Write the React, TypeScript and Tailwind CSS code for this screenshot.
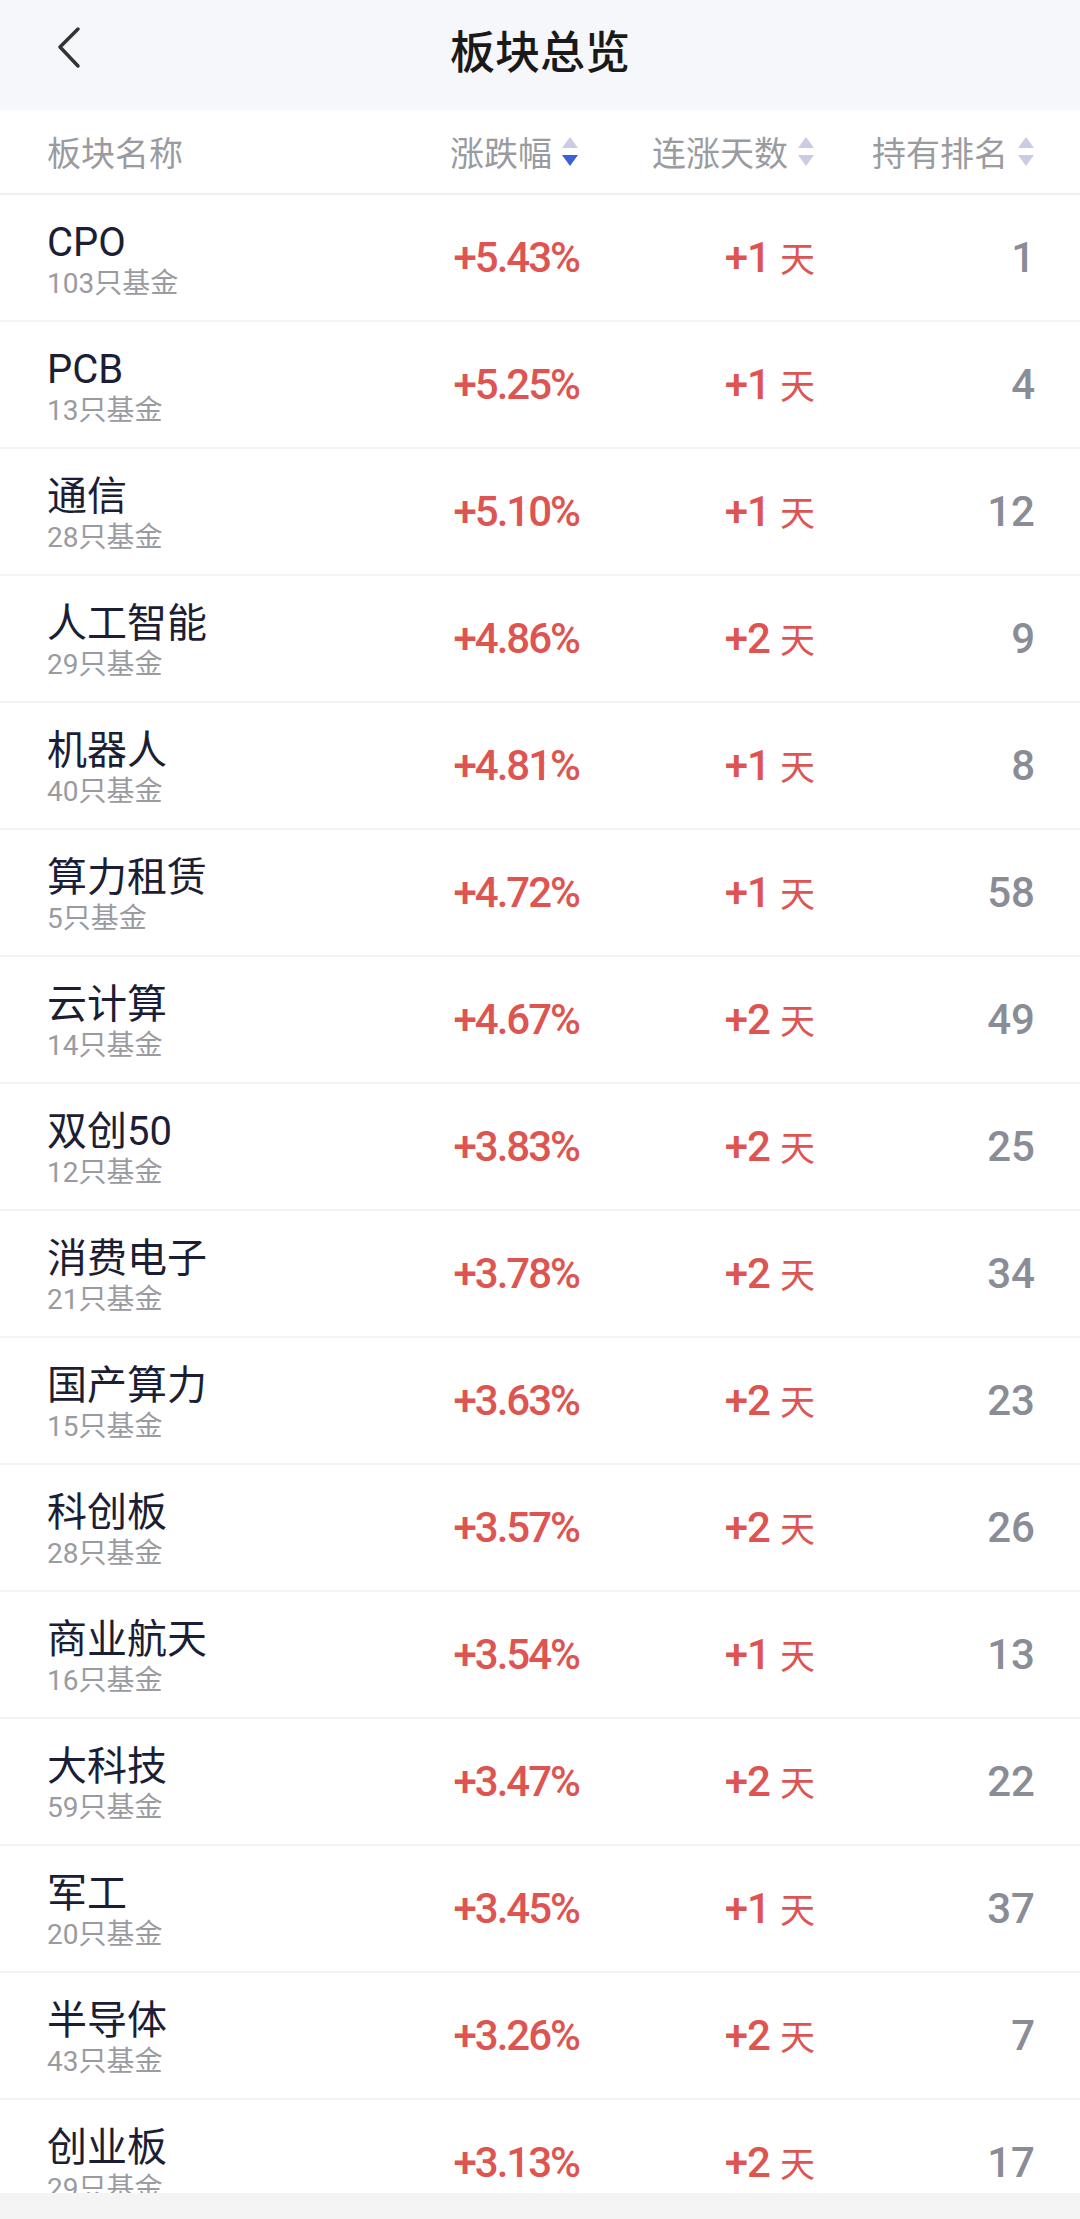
import React from 'react';

type Sector = {
    name: string;
    funds: number;
    change: string;
    days: number;
    rank: number;
};

const sectors: Sector[] = [
    { name: 'CPO', funds: 103, change: '+5.43%', days: 1, rank: 1 },
    { name: 'PCB', funds: 13, change: '+5.25%', days: 1, rank: 4 },
    { name: '通信', funds: 28, change: '+5.10%', days: 1, rank: 12 },
    { name: '人工智能', funds: 29, change: '+4.86%', days: 2, rank: 9 },
    { name: '机器人', funds: 40, change: '+4.81%', days: 1, rank: 8 },
    { name: '算力租赁', funds: 5, change: '+4.72%', days: 1, rank: 58 },
    { name: '云计算', funds: 14, change: '+4.67%', days: 2, rank: 49 },
    { name: '双创50', funds: 12, change: '+3.83%', days: 2, rank: 25 },
    { name: '消费电子', funds: 21, change: '+3.78%', days: 2, rank: 34 },
    { name: '国产算力', funds: 15, change: '+3.63%', days: 2, rank: 23 },
    { name: '科创板', funds: 28, change: '+3.57%', days: 2, rank: 26 },
    { name: '商业航天', funds: 16, change: '+3.54%', days: 1, rank: 13 },
    { name: '大科技', funds: 59, change: '+3.47%', days: 2, rank: 22 },
    { name: '军工', funds: 20, change: '+3.45%', days: 1, rank: 37 },
    { name: '半导体', funds: 43, change: '+3.26%', days: 2, rank: 7 },
    { name: '创业板', funds: 29, change: '+3.13%', days: 2, rank: 17 },
];

const SortIcon = ({ active }: { active?: 'down' | 'up' }) => (
    <svg width="18" height="32" viewBox="0 0 18 32" className="ml-[9px] shrink-0">
        <path d="M9 1 L17 12 L1 12 Z" fill={active === 'up' ? '#3f5fd6' : '#c9cce3'} />
        <path d="M1 19 L17 19 L9 30 Z" fill={active === 'down' ? '#3f5fd6' : '#c9cce3'} />
    </svg>
);

const num = "font-['Roboto','Noto_Sans_CJK_SC',sans-serif] font-medium";

export default function App() {
    return (
        <div className="w-[1080px] h-[2219px] flex flex-col overflow-hidden bg-white font-['Roboto','Noto_Sans_CJK_SC',sans-serif]">
            {/* top bar */}
            <div className="h-[110px] shrink-0 bg-[#f6f7fb] flex items-center relative">
                <svg width="30" height="44" viewBox="0 0 30 44" className="absolute left-[54px] top-[26px]">
                    <path d="M24 3 L6 21 L24 40" stroke="#333333" strokeWidth="3.5" fill="none" strokeLinecap="round" strokeLinejoin="round" />
                </svg>
                <h1 className="w-full text-center text-[45px] leading-none font-medium text-[#1a1a1a] font-['Noto_Sans_CJK_SC',sans-serif] -mt-[12px]">
                    板块总览
                </h1>
            </div>

            {/* column header */}
            <div className="h-[85px] shrink-0 flex items-center pl-[47px] pr-[45px] border-b-2 border-[#f0f0f2] text-[34px] text-[#9a9ba1] font-['Noto_Sans_CJK_SC',sans-serif]">
                <div className="flex-1">板块名称</div>
                <div className="w-[200px] flex items-center justify-end">
                    涨跌幅
                    <SortIcon active="down" />
                </div>
                <div className="w-[236px] flex items-center justify-end">
                    连涨天数
                    <SortIcon />
                </div>
                <div className="w-[220px] flex items-center justify-end">
                    持有排名
                    <SortIcon />
                </div>
            </div>

            {/* rows */}
            <div className="flex-1 overflow-hidden">
                {sectors.map((s) => (
                    <div key={s.name} className="h-[127px] flex items-center pl-[47px] pr-[45px] border-b-2 border-[#f3f3f5]">
                        <div className="flex-1 flex flex-col pt-[6px]">
                            <span className="text-[40px] leading-[46px] text-[#1b1e35]">{s.name}</span>
                            <span className="text-[28px] leading-[36px] text-[#9a9ba1]">{s.funds}只基金</span>
                        </div>
                        <div className={`w-[200px] text-right text-[42px] tracking-[-2px] text-[#de5451] ${num}`}>
                            {s.change}
                        </div>
                        <div className="w-[236px] flex items-center justify-end text-[#de5451]">
                            <span className={`text-[42px] tracking-[-1px] ${num}`}>+{s.days}</span>
                            <span className="ml-[10px] text-[35px] font-['Noto_Sans_CJK_SC',sans-serif]">天</span>
                        </div>
                        <div className={`w-[220px] text-right text-[42px] text-[#8a8c96] ${num}`}>{s.rank}</div>
                    </div>
                ))}
            </div>

            {/* bottom bar */}
            <div className="h-[26px] shrink-0 bg-[#f4f4f5]" />
        </div>
    );
}
